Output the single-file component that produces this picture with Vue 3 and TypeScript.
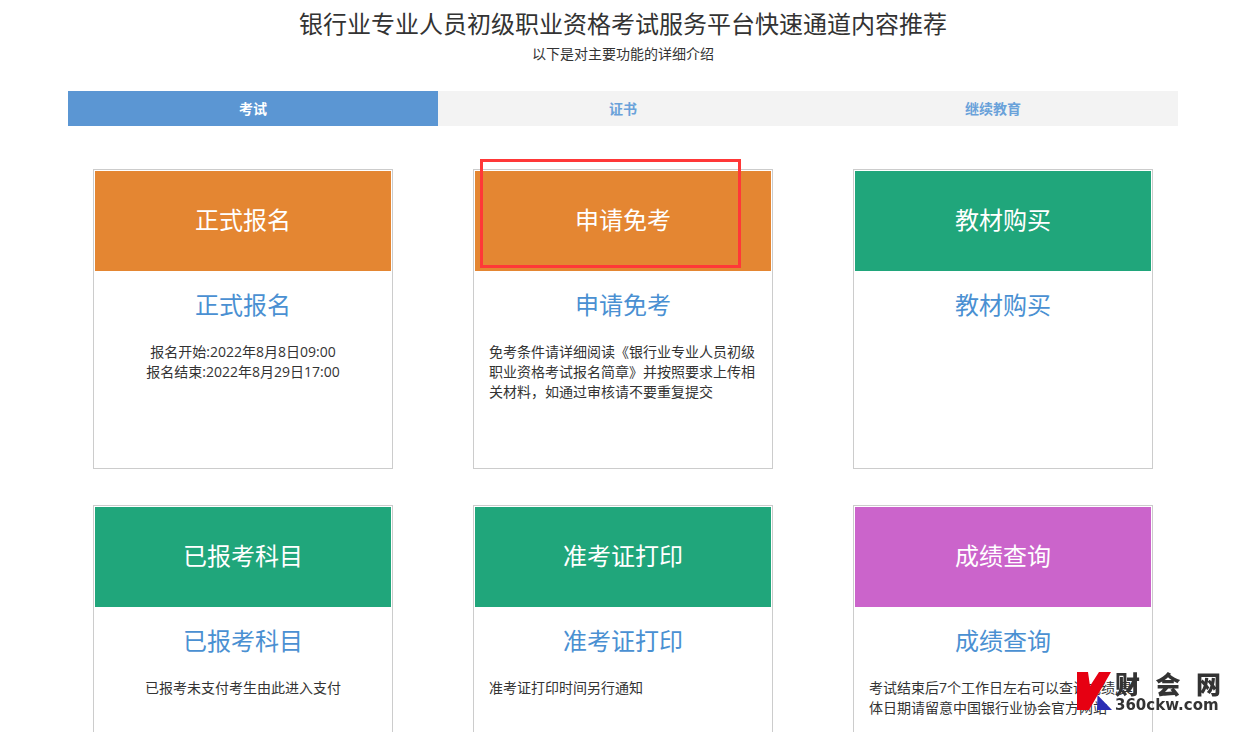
<script setup lang="ts">
import { ref } from 'vue'

interface Card {
  title: string
  tone: 'orange' | 'green' | 'purple'
  lines: string[]
  centered?: boolean
  marked?: boolean
}

const tabs: string[] = ['考试', '证书', '继续教育']
const active = ref(0)

const cards: Card[] = [
  { title: '正式报名', tone: 'orange', lines: ['报名开始:2022年8月8日09:00', '报名结束:2022年8月29日17:00'], centered: true },
  { title: '申请免考', tone: 'orange', lines: ['免考条件请详细阅读《银行业专业人员初级职业资格考试报名简章》并按照要求上传相关材料，如通过审核请不要重复提交'], marked: true },
  { title: '教材购买', tone: 'green', lines: [] },
  { title: '已报考科目', tone: 'green', lines: ['已报考未支付考生由此进入支付'], centered: true },
  { title: '准考证打印', tone: 'green', lines: ['准考证打印时间另行通知'] },
  { title: '成绩查询', tone: 'purple', lines: ['考试结束后7个工作日左右可以查询成绩,具体日期请留意中国银行业协会官方网站'] },
]
</script>

<template>
  <main class="page">
    <header class="intro">
      <h1>银行业专业人员初级职业资格考试服务平台快速通道内容推荐</h1>
      <p>以下是对主要功能的详细介绍</p>
    </header>

    <div class="tabs" role="tablist">
      <button
        v-for="(tab, i) in tabs"
        :key="tab"
        type="button"
        role="tab"
        class="tab"
        :class="{ active: active === i }"
        :aria-selected="active === i"
        @click="active = i"
      >{{ tab }}</button>
    </div>

    <section class="cards">
      <article v-for="card in cards" :key="card.title" class="card">
        <a href="#" class="banner" :class="card.tone">{{ card.title }}</a>
        <h2>{{ card.title }}</h2>
        <div class="desc" :class="{ centered: card.centered }">
          <p v-for="line in card.lines" :key="line">{{ line }}</p>
        </div>
        <span v-if="card.marked" class="mark"></span>
      </article>
    </section>

    <div class="brand">
      <svg class="brand-logo" width="36" height="38" viewBox="0 0 36 38" aria-hidden="true">
        <path fill="#e60012" d="M0 0H11L13 14L22 0H34L12 38H0Z" />
        <path fill="#2a2db4" d="M20.500 23L35 38H20Z" />
      </svg>
      <div class="brand-text">
        <div class="brand-name"><span>财</span><span>会</span><span>网</span></div>
        <div class="brand-site">360ckw.com</div>
      </div>
    </div>
  </main>
</template>

<style>
body {
  margin: 0;
  background: #fff;
}
</style>

<style scoped>
.page {
  box-sizing: border-box;
  padding: 8px 55px 36px 68px;
  font-family: "Open Sans", "Noto Sans CJK SC", sans-serif;
  font-size: 14px;
  line-height: 20px;
  color: #333;
}

.intro {
  text-align: center;
}

h1,
h2,
p {
  margin: 0;
  font-weight: 400;
}

h1 {
  font-size: 24px;
  line-height: 32px;
}

.intro p {
  margin-top: 4px;
}

.tabs {
  display: grid;
  grid-template-columns: repeat(3, 1fr);
  margin-top: 27px;
  background: #f3f3f3;
}

.tab {
  height: 35px;
  padding: 0;
  border: 0;
  background: transparent;
  color: #6aa2da;
  font: inherit;
  font-weight: 700;
  cursor: pointer;
}

.tab.active {
  background: #5b96d3;
  color: #fff;
}

.cards {
  display: grid;
  grid-template-columns: repeat(3, 1fr);
  gap: 36px 80px;
  margin-top: 43px;
  padding: 0 25px;
}

.card {
  position: relative;
  box-sizing: border-box;
  min-height: 300px;
  padding: 1px;
  border: 1px solid #ccc;
}

.banner {
  display: flex;
  box-sizing: border-box;
  align-items: center;
  justify-content: center;
  height: 100px;
  padding-bottom: 2px;
  font-size: 24px;
  color: #fff;
  text-decoration: none;
}

.orange {
  background: #e48632;
}

.green {
  background: #20a67b;
}

.purple {
  background: #cb64cb;
}

h2 {
  margin-top: 18px;
  font-size: 24px;
  line-height: 32px;
  text-align: center;
  color: #4a90d2;
}

.desc {
  margin-top: 21px;
  padding: 0 14px;
}

.centered {
  text-align: center;
}

.mark {
  position: absolute;
  box-sizing: border-box;
  top: -11px;
  left: 6px;
  width: 261px;
  height: 109px;
  border: 3px solid #ff3838;
  pointer-events: none;
}

.brand {
  position: fixed;
  right: 12px;
  bottom: 18px;
  display: flex;
  align-items: flex-end;
  gap: 2px;
  color: #333;
}

.brand-logo {
  margin-bottom: 4px;
}

.brand-text {
  min-width: 106px;
}

.brand-name {
  display: flex;
  justify-content: space-between;
  font-size: 25px;
  font-weight: 900;
  line-height: 24px;
}

.brand-site {
  font-family: "DejaVu Sans", sans-serif;
  font-size: 15px;
  font-weight: 700;
  line-height: 18px;
}
</style>
